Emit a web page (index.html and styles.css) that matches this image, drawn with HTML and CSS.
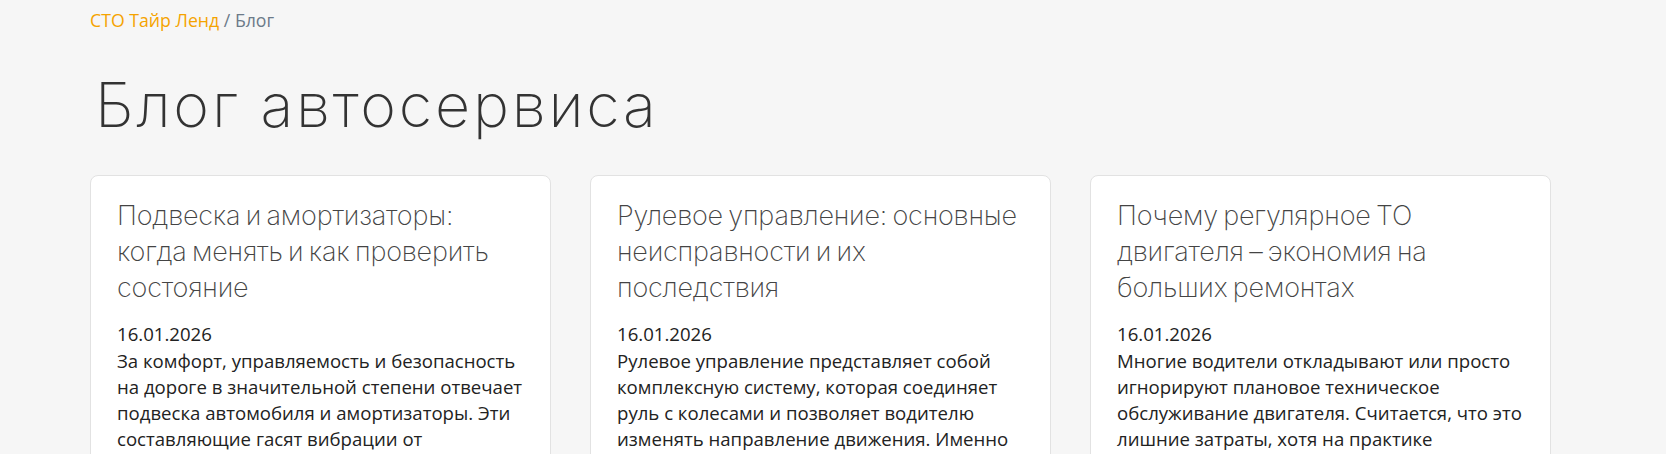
FILE: index.html
```html
<!DOCTYPE html>
<html lang="ru">
<head>
    <meta charset="UTF-8">
    <title>Блог автосервиса</title>
    <link rel="stylesheet" href="styles.css">
</head>
<body>

    <div class="page">
        <div class="breadcrumbs">
            <a class="breadcrumbs__link" href="#">СТО Тайр Ленд</a>
            <span class="breadcrumbs__sep">/</span>
            <span class="breadcrumbs__current">Блог</span>
        </div>

        <h1 class="page__title">Блог автосервиса</h1>

        <div class="posts">
            <div class="post">
                <h2 class="post__title">Подвеска и амортизаторы: когда менять и как проверить состояние</h2>
                <div class="post__date">16.01.2026</div>
                <p class="post__text">За комфорт, управляемость и безопасность на дороге в значительной степени отвечает подвеска автомобиля и амортизаторы. Эти составляющие гасят вибрации от неровностей дороги и обеспечивают сцепление колес с покрытием.</p>
            </div>
            <div class="post">
                <h2 class="post__title">Рулевое управление: основные неисправности и их последствия</h2>
                <div class="post__date">16.01.2026</div>
                <p class="post__text">Рулевое управление представляет собой комплексную систему, которая соединяет руль с колесами и позволяет водителю изменять направление движения. Именно от его исправности зависит безопасность.</p>
            </div>
            <div class="post">
                <h2 class="post__title">Почему регулярное ТО двигателя – экономия на больших ремонтах</h2>
                <div class="post__date">16.01.2026</div>
                <p class="post__text">Многие водители откладывают или просто игнорируют плановое техническое обслуживание двигателя. Считается, что это лишние затраты, хотя на практике своевременная замена масла обходится дешевле.</p>
            </div>
        </div>
    </div>

</body>
</html>
```

FILE: styles.css
```css
html {
    background-color: #f6f6f6;
    font-family: "Open Sans", sans-serif;
}

body {
    margin: 0;
}

.page {
    margin-left: 90px;
    padding-top: 7px;
    width: 1461px;
}

.breadcrumbs {
    color: #6c7a89;
    font-size: 17.7px;
    line-height: 26px;
}

.breadcrumbs__link {
    color: #f5a300;
    text-decoration: none;
}

.page__title {
    color: #333;
    font-family: Inter, sans-serif;
    font-size: 61px;
    font-weight: 200;
    letter-spacing: 2.8px;
    line-height: 76px;
    margin: 34px 0 32px 5px;
}

.posts {
    display: grid;
    gap: 39px;
    grid-template-columns: repeat(3, 1fr);
}

.post {
    background-color: #fff;
    border: 1px solid #e2e2e2;
    border-radius: 8px;
    min-height: 320px;
    padding: 22px 26px;
}

.post__title {
    color: #444;
    font-family: Inter, sans-serif;
    font-size: 27px;
    font-weight: 200;
    letter-spacing: -0.2px;
    line-height: 36px;
    margin: 0 0 14px;
    word-spacing: -2px;
}

.post__date {
    color: #222;
    font-size: 18.6px;
    line-height: 28px;
}

.post__text {
    color: #222;
    font-size: 18.6px;
    line-height: 26px;
    margin: 0;
}
```
